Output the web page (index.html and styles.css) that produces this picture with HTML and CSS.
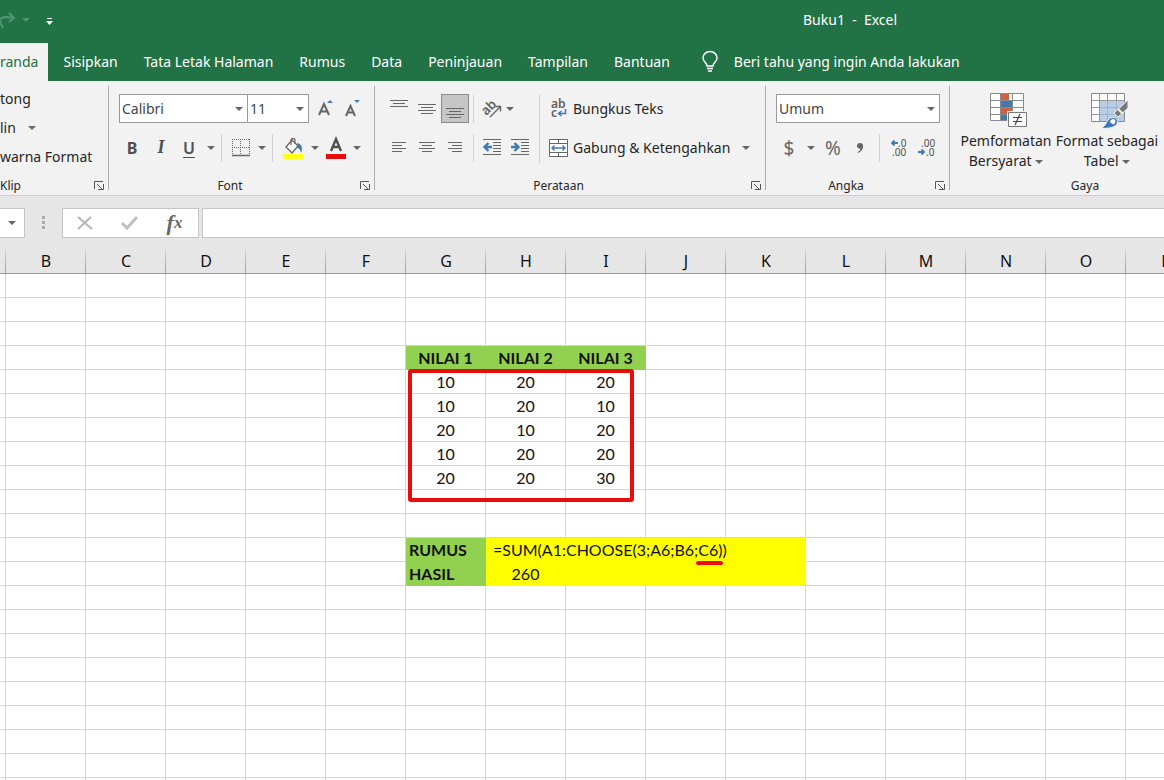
FILE: index.html
```html
<!DOCTYPE html>
<html lang="id">
<head>
<meta charset="utf-8">
<meta name="viewport" content="width=device-width, initial-scale=1">
<title>Buku1 - Excel</title>
<link rel="stylesheet" href="styles.css">
</head>
<body>
<div class="app">
  <header class="title-bar">
    <button class="qat-button redo" type="button" aria-label="Ulangi">
      <svg width="16" height="20" viewBox="0 0 16 20" fill="none" stroke="#4f9671" stroke-width="2"><path d="M0 9C3 6 8 7 13 8M9 3l5 5-5 4M0 10c0 3 1 5 3 8"/></svg>
    </button>
    <button class="qat-button redo-menu" type="button" aria-label="Daftar ulangi"><span class="caret"></span></button>
    <button class="qat-button customize" type="button" aria-label="Kustomisasi bilah akses cepat">
      <svg width="7" height="8" viewBox="0 0 7 8" fill="#fff"><path d="M1 0h5v1H1zM0 3h7L3.500 7z"/></svg>
    </button>
    <h1 class="document-title">Buku1&nbsp; -&nbsp; Excel</h1>
  </header>

  <nav class="tabs">
    <button class="tab active" type="button">randa</button>
    <button class="tab" type="button">Sisipkan</button>
    <button class="tab" type="button">Tata Letak Halaman</button>
    <button class="tab" type="button">Rumus</button>
    <button class="tab" type="button">Data</button>
    <button class="tab" type="button">Peninjauan</button>
    <button class="tab" type="button">Tampilan</button>
    <button class="tab" type="button">Bantuan</button>
    <button class="tab tell-me" type="button">
      <svg width="16" height="21" viewBox="0 0 16 21" fill="none" stroke="#fff" stroke-width="1.500"><path d="M5 15c0-3-4-4-4-8a7 6.500 0 0 1 14 0c0 4-4 5-4 8zM5 17.500h6M6 20h4"/></svg>
      Beri tahu yang ingin Anda lakukan
    </button>
  </nav>

  <main class="ribbon">
    <section class="group clipboard">
      <div class="clipboard-list">
        <button class="text-button" type="button">tong</button>
        <button class="text-button" type="button">lin <span class="caret"></span></button>
        <button class="text-button" type="button">warna Format</button>
      </div>
      <footer class="group-footer">
        <span class="group-name">Klip</span>
        <button class="launcher" type="button" aria-label="Opsi papan klip"><svg width="10" height="9" viewBox="0 0 10 9" fill="none" stroke="#555"><path d="M.5 8V.5H9M3 3l5 5M9.500 3v5.500H4"/></svg></button>
      </footer>
    </section>

    <section class="group font">
      <div class="row">
        <label class="select font-name"><select aria-label="Font"><option>Calibri</option></select></label>
        <label class="select font-size"><select aria-label="Ukuran font"><option>11</option></select></label>
        <button class="tool grow" type="button" aria-label="Perbesar font">
          <svg width="18" height="20" viewBox="0 0 18 20"><path d="M2 16 7 5l5 11M4 12.500h6" fill="none" stroke="#666" stroke-width="2"/><path d="M10 4l3-3 3 3z" fill="#3f7ab5"/></svg>
        </button>
        <button class="tool grow" type="button" aria-label="Perkecil font">
          <svg width="18" height="20" viewBox="0 0 18 20"><path d="M2 17 6.500 7l4.500 10M4 13.500h5.500" fill="none" stroke="#666" stroke-width="2"/><path d="M10 1l3 3 3-3z" fill="#3f7ab5"/></svg>
        </button>
      </div>
      <div class="row">
        <button class="tool bold" type="button">B</button>
        <button class="tool italic" type="button">I</button>
        <button class="tool underline" type="button">U</button>
        <button class="drop" type="button" aria-label="Gaya garis bawah"><span class="caret"></span></button>
        <span class="divider"></span>
        <button class="tool" type="button" aria-label="Batas">
          <svg width="18" height="18" viewBox="0 0 18 18" fill="none" stroke="#666"><path d="M0 .5h18M0 8.500h18M.5 0v17M8.500 0v17M17.500 0v17" stroke-dasharray="1 1"/><path d="M0 16.500h18" stroke-width="1.500"/></svg>
        </button>
        <button class="drop" type="button" aria-label="Daftar batas"><span class="caret"></span></button>
        <span class="divider"></span>
        <button class="tool wide" type="button" aria-label="Warna isian">
          <svg width="20" height="22" viewBox="0 0 20 22"><path d="M0 17h20v5H0z" fill="#ffff1a"/><path d="M9 3l6 6-6 7-6-6z" fill="#fff" stroke="#666" stroke-width="1.300"/><path d="M8 8V3c0-2 4-2 4 0v4" fill="none" stroke="#79685f" stroke-width="1.300"/><path d="M14 6c5 1 6 5 4 10-1-4-2-5-4-5l1-2z" fill="#3f7ab5"/></svg>
        </button>
        <button class="drop" type="button" aria-label="Daftar warna isian"><span class="caret"></span></button>
        <button class="tool" type="button" aria-label="Warna font">
          <svg width="20" height="22" viewBox="0 0 20 22"><path d="M0 17h20v5H0z" fill="#e80c0c"/><path d="M5 14 10 2l5 12M6.500 10h7" fill="none" stroke="#505050" stroke-width="2.400"/></svg>
        </button>
        <button class="drop" type="button" aria-label="Daftar warna font"><span class="caret"></span></button>
      </div>
      <footer class="group-footer">
        <span class="group-name">Font</span>
        <button class="launcher" type="button" aria-label="Opsi font"><svg width="10" height="9" viewBox="0 0 10 9" fill="none" stroke="#555"><path d="M.5 8V.5H9M3 3l5 5M9.500 3v5.500H4"/></svg></button>
      </footer>
    </section>

    <section class="group alignment">
      <div class="columns">
        <div class="stack">
          <div class="row">
            <button class="align" type="button" aria-label="Rata atas"><svg width="18" height="18" viewBox="0 0 18 18" stroke="#666"><path d="M0 .5h18M3 3.500h12M0 6.500h18"/></svg></button>
            <button class="align" type="button" aria-label="Rata tengah"><svg width="18" height="18" viewBox="0 0 18 18" stroke="#666"><path d="M0 4.500h18M3 7.500h12M0 10.500h18M3 13.500h12"/></svg></button>
            <button class="align pressed" type="button" aria-label="Rata bawah"><svg width="18" height="18" viewBox="0 0 18 18" stroke="#666"><path d="M0 8.500h18M3 11.500h12M0 14.500h18M3 17.500h12"/></svg></button>
            <span class="divider"></span>
            <button class="indent" type="button" aria-label="Orientasi">
              <svg width="20" height="18" viewBox="0 0 20 18"><text class="glyph" x="0" y="12" font-size="13" transform="rotate(-45 7 9)">ab</text><path d="M8 17 18 7M13.500 6.500H18.500v5" fill="none" stroke="#666" stroke-width="1.400"/></svg>
            </button>
            <button class="drop" type="button" aria-label="Daftar orientasi"><span class="caret"></span></button>
          </div>
          <div class="row">
            <button class="align" type="button" aria-label="Rata kiri"><svg width="14" height="11" viewBox="0 0 14 11" stroke="#666"><path d="M0 .5h14M0 3.500h10M0 6.500h14M0 9.500h10"/></svg></button>
            <button class="align" type="button" aria-label="Tengah"><svg width="16" height="11" viewBox="0 0 16 11" stroke="#666"><path d="M0 .5h16M3 3.500h10M0 6.500h16M3 9.500h10"/></svg></button>
            <button class="align" type="button" aria-label="Rata kanan"><svg width="14" height="11" viewBox="0 0 14 11" stroke="#666"><path d="M0 .5h14M4 3.500h10M0 6.500h14M4 9.500h10"/></svg></button>
            <span class="divider"></span>
            <button class="indent" type="button" aria-label="Kurangi inden"><svg width="18" height="17" viewBox="0 0 18 17" fill="none" stroke="#666"><path d="M0 .5h18M10 3.500h8M10 6.500h8M10 9.500h8M10 12.500h8M0 15.500h18"/><path d="M9 8H2M5.500 4 1.500 8l4 4" stroke="#3f7ab5" stroke-width="2.400"/></svg></button>
            <button class="indent second" type="button" aria-label="Tambah inden"><svg width="18" height="17" viewBox="0 0 18 17" fill="none" stroke="#666"><path d="M0 .5h18M10 3.500h8M10 6.500h8M10 9.500h8M10 12.500h8M0 15.500h18"/><path d="M0 8h7M3.500 4l4 4-4 4" stroke="#3f7ab5" stroke-width="2.400"/></svg></button>
          </div>
        </div>
        <span class="divider tall"></span>
        <div class="stack">
          <div class="row">
            <button class="text-button" type="button">
              <svg width="20" height="20" viewBox="0 0 20 20"><text class="glyph" x="2" y="9" font-size="12">ab</text><text class="glyph" x="2" y="18" font-size="12">c</text><path d="M16.500 10v4.500H10M12.500 12l-3 2.500 3 2.500" fill="none" stroke="#3f7ab5" stroke-width="1.500"/></svg>
              Bungkus Teks
            </button>
          </div>
          <div class="row">
            <button class="text-button" type="button">
              <svg width="20" height="20" viewBox="0 0 20 20"><path d="M.5 1.500h18v17H.5zM.5 5.500h18M.5 14.500h18M9.500 1.500v4M9.500 14.500v4" fill="#fff" stroke="#666"/><path d="M3 10h13M5.500 7.500 3 10l2.500 2.500M13.500 7.500 16 10l-2.500 2.500" fill="none" stroke="#3f7ab5" stroke-width="1.400"/></svg>
              Gabung &amp; Ketengahkan
            </button>
            <button class="drop merge-menu" type="button" aria-label="Daftar gabung"><span class="caret"></span></button>
          </div>
        </div>
      </div>
      <footer class="group-footer">
        <span class="group-name">Perataan</span>
        <button class="launcher" type="button" aria-label="Opsi perataan"><svg width="10" height="9" viewBox="0 0 10 9" fill="none" stroke="#555"><path d="M.5 8V.5H9M3 3l5 5M9.500 3v5.500H4"/></svg></button>
      </footer>
    </section>

    <section class="group number">
      <div class="row">
        <label class="select number-format"><select aria-label="Format angka"><option>Umum</option></select></label>
      </div>
      <div class="row">
        <button class="tool symbol" type="button">$</button>
        <button class="drop" type="button" aria-label="Daftar format akuntansi"><span class="caret"></span></button>
        <button class="tool symbol" type="button">%</button>
        <button class="tool comma" type="button" aria-label="Gaya koma"><svg width="8" height="12" viewBox="0 0 8 12"><path d="M4 1c5 0 4 8-2 10l-.5-1C4 9 4.500 7.500 4 6.500 0 7 0 1 4 1z" fill="#666"/></svg></button>
        <span class="divider"></span>
        <button class="align" type="button" aria-label="Tambah desimal"><svg width="16" height="18" viewBox="0 0 16 18"><text class="digit" x="8" y="8">.0</text><text class="digit" x="2" y="17">.00</text><path d="M8 4H2M4.500 1.500 2 4l2.500 2.500" fill="none" stroke="#3f7ab5" stroke-width="1.800"/></svg></button>
        <button class="align" type="button" aria-label="Kurangi desimal"><svg width="16" height="18" viewBox="0 0 16 18"><text class="digit" x="3" y="8">.00</text><text class="digit" x="8" y="17">.0</text><path d="M0 13h6M3.500 10.500 6 13l-2.500 2.500" fill="none" stroke="#3f7ab5" stroke-width="1.800"/></svg></button>
      </div>
      <footer class="group-footer">
        <span class="group-name">Angka</span>
        <button class="launcher" type="button" aria-label="Opsi angka"><svg width="10" height="9" viewBox="0 0 10 9" fill="none" stroke="#555"><path d="M.5 8V.5H9M3 3l5 5M9.500 3v5.500H4"/></svg></button>
      </footer>
    </section>

    <section class="group styles">
      <div class="columns">
        <button class="big-button" type="button">
          <svg width="38" height="36" viewBox="0 0 38 36"><path d="M.5.5h33v27H.5z" fill="#fff"/><path d="M11 1h8v7h-8zM11 15h11v6H11z" fill="#d2603f"/><path d="M11 8h11v6H11zM11 21h6v7h-6z" fill="#3f7ab5"/><path d="M.5.5h33v27H.5zM.5 7.500h33M.5 14.500h33M.5 21.500h33M10.500 0v28M22.500 0v28" fill="none" stroke="#8a8a8a"/><path d="M17 18h21v17H17z" fill="#f2f2f2"/><path d="M18.500 19.500h18v14h-18z" fill="#fff" stroke="#777"/><path d="M23 24.500h9M23 28.500h9M30 21l-5 11" stroke="#444" stroke-width="1.200"/></svg>
          <span>Pemformatan<br>Bersyarat <span class="caret"></span></span>
        </button>
        <button class="big-button second" type="button">
          <svg width="38" height="36" viewBox="0 0 38 36"><path d="M.5.5h33v28H.5z" fill="#fff"/><path d="M9 8h24v20H9z" fill="#b9cde5"/><path d="M.5.5h33v28H.5z" fill="none" stroke="#8a8a8a"/><path d="M1 7.500h32M1 14.500h8M1 21.500h8M8.500 1v27M16.500 1v7M25.500 1v7" fill="none" stroke="#999"/><path d="M9 14.500h24M9 21.500h24M16.500 8v20M25.500 8v20" stroke="#9fb2cc"/><path d="M37 7v8l-10 9-4-4z" fill="#777" stroke="#f2f2f2"/><path d="M27 16l5 5" stroke="#f2f2f2" stroke-width="2"/><path d="M10 35c5-2 5-6 8-9 4-4 11 0 8 5-3 4-10 5-16 4z" fill="#3f7ab5" stroke="#f2f2f2"/><path d="M19 29c1-5 7-3 5 1-2 3-3 0-5-1z" fill="#fff"/></svg>
          <span>Format sebagai<br>Tabel <span class="caret"></span></span>
        </button>
      </div>
      <footer class="group-footer"><span class="group-name">Gaya</span></footer>
    </section>
  </main>

  <div class="formula-bar">
    <button class="name-box" type="button" aria-label="Kotak nama"><span class="caret"></span></button>
    <svg class="grip" width="4" height="14" viewBox="0 0 4 14" fill="#aaa"><path d="M0 0h3v3H0zM0 5h3v3H0zM0 10h3v3H0z"/></svg>
    <div class="formula-actions">
      <button type="button" aria-label="Batal"><svg width="16" height="14" viewBox="0 0 16 14" fill="none" stroke="#b8b8b8" stroke-width="2.200"><path d="M1 1l14 12M14 1 1 13"/></svg></button>
      <button type="button" aria-label="Enter"><svg width="17" height="14" viewBox="0 0 17 14" fill="none" stroke="#c0c0c0" stroke-width="3"><path d="M1 7l5 5L16 1"/></svg></button>
      <button class="insert-function" type="button" aria-label="Sisipkan fungsi">f<span>x</span></button>
    </div>
    <input class="formula-input" type="text" aria-label="Bilah rumus">
  </div>

  <div class="sheet">
    <table class="grid">
      <thead><tr id="column-heads"></tr></thead>
      <tbody id="cells"></tbody>
    </table>
    <div class="range-mark"></div>
  </div>
</div>
<script src="sheet.js"></script>
</body>
</html>
```
FILE: styles.css
```css
* { box-sizing: border-box; }

body {
  margin: 0;
  background: #fff;
  color: #262626;
  font-family: "Noto Sans", "Open Sans", sans-serif;
  font-size: 14px;
}

button {
  display: flex;
  align-items: center;
  justify-content: center;
  flex: none;
  margin: 0;
  padding: 0;
  border: 0;
  background: none;
  color: inherit;
  font: inherit;
  white-space: nowrap;
}

svg { display: block; flex: none; overflow: visible; }

.app {
  display: flex;
  flex-direction: column;
  height: 100vh;
  overflow: hidden;
}

.caret {
  display: inline-block;
  border: 4px solid transparent;
  border-top-color: #666;
  border-bottom: 0;
}

/* Title and tabs */
.title-bar {
  display: flex;
  align-items: center;
  flex: none;
  height: 43px;
  padding-bottom: 4px;
  background: #217346;
  color: #fff;
}
.redo { width: 16px; }
.redo-menu { width: 20px; }
.redo-menu .caret { border-top-color: #4f9671; }
.customize { width: 26px; padding-top: 4px; }
.document-title {
  margin: 0 0 0 741px;
  font-size: 14px;
  font-weight: 400;
  white-space: nowrap;
}

.tabs {
  display: flex;
  flex: none;
  height: 38px;
  overflow: hidden;
  background: #217346;
}
.tab { padding: 0 13px 2px; color: #fff; }
.tab.active { margin-right: 2px; padding-left: 0; padding-right: 10px; background: #f2f2f2; color: #217346; }
.tell-me { gap: 16px; padding-left: 19px; }

/* Ribbon */
.ribbon {
  display: flex;
  flex: none;
  height: 115px;
  overflow: hidden;
  border-bottom: 1px solid #cfcfcf;
  background: #f2f2f2;
}
.group {
  display: flex;
  flex: none;
  flex-direction: column;
  gap: 10px;
  padding: 13px 0 0 10px;
  background: linear-gradient(#adadad, #adadad) right 5px / 1px 104px no-repeat;
}
.clipboard { gap: 0; width: 109px; padding: 3px 0 0; }
.font { width: 266px; }
.alignment { width: 391px; }
.number { width: 184px; }
.styles { gap: 0; width: 270px; padding: 12px 0 0 8px; background: none; }

.group-footer {
  position: relative;
  display: flex;
  align-items: center;
  justify-content: center;
  height: 20px;
  margin: auto 0 0 -10px;
  padding-right: 24px;
  font-size: 12px;
}
.clipboard .group-footer { justify-content: flex-start; margin-left: 0; }
.styles .group-footer { margin-left: -8px; padding-right: 0; }
.launcher { position: absolute; right: 5px; top: 6px; }

.row { display: flex; align-items: center; height: 29px; }
.columns { display: flex; }
.stack { display: flex; flex-direction: column; gap: 10px; }

.clipboard-list { display: flex; flex-direction: column; align-items: flex-start; }
.clipboard-list .text-button { gap: 12px; height: 29px; }
.text-button { gap: 4px; }

.tool { width: 22px; height: 29px; color: #505050; }
.tool.wide { width: 24px; }
.grow { width: 27px; }
.bold { width: 26px; font-size: 16px; font-weight: 700; }
.italic { width: 32px; font: italic 700 18px "Liberation Serif", serif; }
.underline { width: 24px; font-size: 16px; font-weight: 600; text-decoration: underline; text-underline-offset: 3px; }
.drop { width: 20px; height: 29px; }
.divider { flex: none; width: 1px; height: 28px; margin-right: 8px; background: #d0d0d0; }
.divider.tall { height: 69px; margin: 0 9px; }

.select { position: relative; display: block; height: 29px; }
.select::after {
  content: "";
  position: absolute;
  right: 5px;
  top: 13px;
  border: 4px solid transparent;
  border-top-color: #666;
  border-bottom: 0;
  pointer-events: none;
}
.select select {
  width: 100%;
  height: 100%;
  padding: 0 2px;
  appearance: none;
  border: 1px solid #999;
  border-radius: 0;
  background: #fff;
  color: #444;
  font: inherit;
}
.font-name { width: 129px; }
.font-size { width: 62px; margin-left: -1px; }
.font-size + .grow { margin-left: 3px; }
.number-format { width: 164px; }

.align { width: 28px; height: 29px; }
.align.pressed { border: 1px solid #8a8a8a; background: #c6c6c6; }
.alignment .row .divider { margin-left: 4px; }
.alignment .stack:first-child { width: 145px; }
.indent { width: 20px; height: 29px; }
.indent.second { margin-left: 8px; }
.alignment .drop { width: 16px; }
.alignment .merge-menu { width: 20px; margin-left: 6px; }
.glyph { fill: #606060; font-family: "Noto Sans", sans-serif; font-weight: 600; }
.digit { fill: #505050; font-family: "Noto Sans", sans-serif; font-size: 10px; }

.symbol { width: 26px; color: #666; font-size: 19px; }
.number .drop { width: 18px; }
.comma { width: 28px; }
.number .divider { margin: 0 4px 0 5px; }

.big-button { flex-direction: column; gap: 2px; width: 96px; line-height: 20px; }
.big-button.second { width: 106px; }
.big-button svg { margin-left: 6px; }
.big-button .caret { vertical-align: middle; }

/* Formula bar */
.formula-bar {
  display: flex;
  align-items: center;
  flex: none;
  height: 53px;
  padding: 12px 0 11px;
  background: #e6e6e6;
}
.name-box { width: 25px; height: 30px; border: 1px solid #c6c6c6; border-left: 0; background: #fff; }
.grip { margin: 0 16px 0 17px; }
.formula-actions { display: flex; height: 30px; border: 1px solid #c6c6c6; background: #fff; }
.formula-actions button { width: 44px; }
.formula-actions .insert-function { width: 47px; color: #666; font: italic 700 22px "Liberation Serif", serif; }
.insert-function span { font-size: 17px; }
.formula-input {
  flex: 1;
  min-width: 0;
  height: 30px;
  margin-left: 3px;
  border: 1px solid #c6c6c6;
  border-right: 0;
  background: #fff;
}

/* Worksheet */
.sheet { position: relative; flex: 1; min-height: 0; overflow: hidden; }
.grid {
  width: 1206px;
  table-layout: fixed;
  border-collapse: separate;
  border-spacing: 0;
  color: #111;
  font-family: Lato, sans-serif;
  font-size: 16px;
  line-height: 23px;
}
.grid th, .grid td {
  width: 80px;
  height: 24px;
  padding: 0;
  border-right: 1px solid #d4d4d4;
  border-bottom: 1px solid #d4d4d4;
  text-align: center;
  white-space: nowrap;
}
.grid th:first-child, .grid td:first-child { width: 6px; }
.grid th {
  height: 25px;
  padding-top: 1px;
  border-right: 0;
  border-bottom-color: #999;
  background: linear-gradient(#dadada, #999) right / 1px 100% no-repeat #e6e6e6;
  font-family: "Noto Sans", sans-serif;
  font-weight: 400;
}
.grid .green { border-color: #92d050; background: #92d050; font-weight: 700; }
.grid .yellow { border-color: #ff0; background: #ff0; }
.grid .label { padding-left: 3px; text-align: left; }
.grid .formula { padding-left: 7px; text-align: left; }

.argument { position: relative; }
.argument::after {
  content: "";
  position: absolute;
  left: -2px;
  right: 0;
  bottom: -6px;
  height: 4px;
  border-radius: 2px;
  background: #e80c0c;
}
.range-mark {
  position: absolute;
  left: 408px;
  top: 120px;
  width: 226px;
  height: 133px;
  border: 4px solid #e80c0c;
  border-radius: 3px;
}
```
FILE: sheet.js
```js
const columns = ["", ..."BCDEFGHIJKLMNOP"];
const rowCount = 22;

const content = {
  G4: { text: "NILAI 1", style: "green" },
  H4: { text: "NILAI 2", style: "green" },
  I4: { text: "NILAI 3", style: "green" },
  G12: { text: "RUMUS", style: "green label" },
  H12: { html: '=SUM(A1:CHOOSE(3;A6;B6;<span class="argument">C6)</span>)', style: "yellow formula", span: 4 },
  G13: { text: "HASIL", style: "green label" },
  H13: { text: "260", style: "yellow" },
  I13: { style: "yellow" },
  J13: { style: "yellow" },
  K13: { style: "yellow" }
};

const scores = [[10, 20, 20], [10, 20, 10], [20, 10, 20], [10, 20, 20], [20, 20, 30]];
scores.forEach((values, i) => {
  values.forEach((value, j) => {
    content["GHI"[j] + (5 + i)] = { text: value };
  });
});

const heads = document.getElementById("column-heads");
columns.forEach((name) => {
  const head = document.createElement("th");
  head.textContent = name;
  heads.append(head);
});

const body = document.getElementById("cells");
for (let row = 1; row <= rowCount; row++) {
  const line = body.insertRow();
  for (let i = 0; i < columns.length; i++) {
    const cell = line.insertCell();
    const data = content[columns[i] + row];
    if (!data) continue;
    if (data.html) cell.innerHTML = data.html;
    else cell.textContent = data.text ?? "";
    if (data.style) cell.className = data.style;
    if (data.span) {
      cell.colSpan = data.span;
      i += data.span - 1;
    }
  }
}
```
